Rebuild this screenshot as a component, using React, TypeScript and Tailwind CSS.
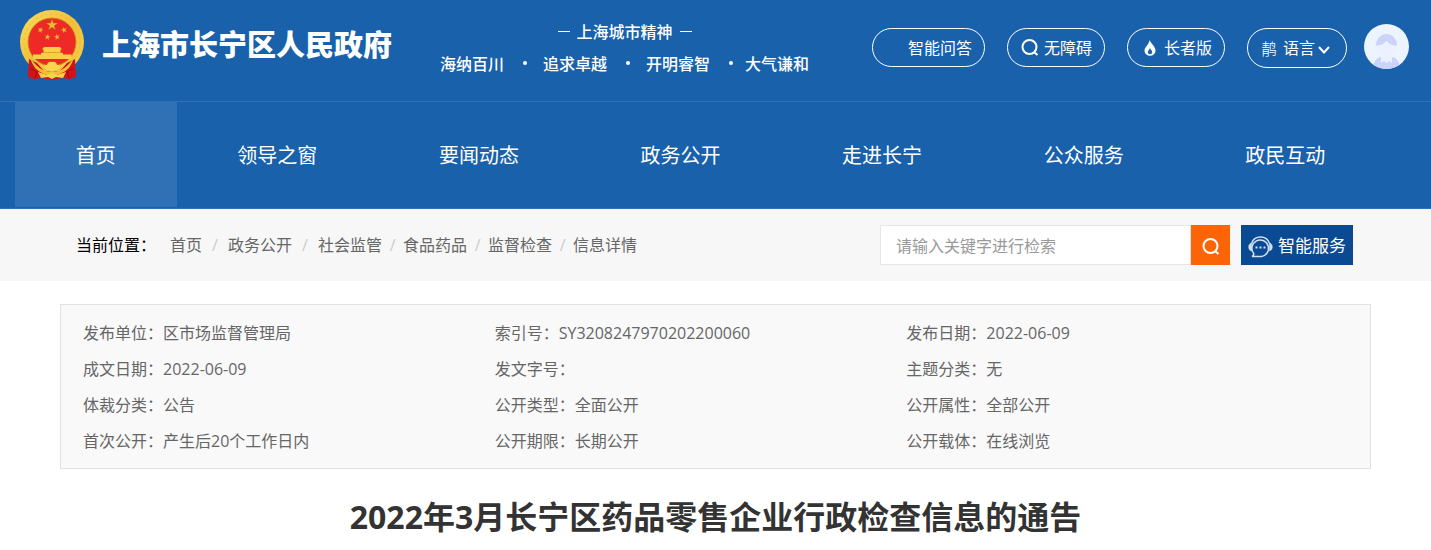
import { FunctionComponent, useState } from "react";

const navItems = ["首页", "领导之窗", "要闻动态", "政务公开", "走进长宁", "公众服务", "政民互动"];

const crumbs = ["首页", "政务公开", "社会监管", "食品药品", "监督检查", "信息详情"];

const infoList = [
  { label: "发布单位", value: "区市场监督管理局" },
  { label: "索引号", value: "SY3208247970202200060" },
  { label: "发布日期", value: "2022-06-09" },
  { label: "成文日期", value: "2022-06-09" },
  { label: "发文字号", value: "" },
  { label: "主题分类", value: "无" },
  { label: "体裁分类", value: "公告" },
  { label: "公开类型", value: "全面公开" },
  { label: "公开属性", value: "全部公开" },
  { label: "首次公开", value: "产生后20个工作日内" },
  { label: "公开期限", value: "长期公开" },
  { label: "公开载体", value: "在线浏览" },
];

const star = "M0 -1L0.225 -0.309H0.951L0.363 0.118L0.588 0.809L0 0.382L-0.588 0.809L-0.363 0.118L-0.951 -0.309H-0.225Z";

const Emblem: FunctionComponent = () => (
  <svg className="h-[70px] w-16 shrink-0" viewBox="0 0 64 70" aria-hidden="true">
    <defs>
      <linearGradient id="gold" x1="0" y1="0" x2="1" y2="1">
        <stop offset="0" stopColor="#f9dd5c" />
        <stop offset="0.5" stopColor="#f0c038" />
        <stop offset="1" stopColor="#f5cf48" />
      </linearGradient>
    </defs>
    <circle cx="32" cy="32" r="32" fill="url(#gold)" />
    <circle cx="32" cy="32" r="28" fill="none" stroke="#e5b232" strokeWidth="0.8" strokeDasharray="2 3" />
    <circle cx="32" cy="32" r="24" fill="#ee2a26" stroke="#c98a1c" strokeWidth="0.8" />
    <path d={star} fill="#eebc33" stroke="#b9551c" strokeWidth="0.08" transform="translate(32 15) scale(6.2)" />
    <path d={star} fill="#eebc33" transform="translate(20.5 20) rotate(20) scale(3.2)" />
    <path d={star} fill="#eebc33" transform="translate(44 20) rotate(-20) scale(3.2)" />
    <path d={star} fill="#eebc33" transform="translate(27.5 27) rotate(10) scale(3.2)" />
    <path d={star} fill="#eebc33" transform="translate(37 27) rotate(-10) scale(3.2)" />
    <path d="M9 49l8 4 7 8 8 1 8-1 7-8 8-4 1 18-6 2-8-1-10 2-10-2-8 1-6-2z" fill="#d51217" />
    <path d="M10 47q9 15 22 15t22-15q-3 13-14 17-8 3-16 0Q13 60 10 47z" fill="#f0c038" />
    <path d="M24 37h16l2 2.5h-1.5V43H43v1.500h8.500V49H13v-4.500h8V43h2.500V39.500H22z" fill="#f8cf45" />
    <path d="M22 42.500h20" stroke="#d78e22" strokeWidth="0.7" />
    <path d="M24 58q0-4 3-3 1-4 5-3 4-1 5 3 3-1 3 3-8 6-16 0z" fill="#f8d651" />
    <path d="M18 62l9 3 5-3 5 3 9-3-3 6-7-1-4 2-4-2-7 1z" fill="#f7d24b" />
    <path d="M10 58l7 4-2 6M54 58l-7 4 2 6" fill="none" stroke="#9f0b12" strokeWidth="1" />
  </svg>
);

const SearchIcon: FunctionComponent = () => (
  <svg className="size-[18px] shrink-0" viewBox="0 0 18 18" fill="none" stroke="currentColor" strokeWidth="2" aria-hidden="true">
    <circle cx="8.500" cy="8" r="7" />
    <path d="M13 13l3.500 3" />
  </svg>
);

const FlameIcon: FunctionComponent = () => (
  <svg className="h-4 w-3 shrink-0" viewBox="0 0 12 16" aria-hidden="true">
    <path
      d="M5.500 0C6.800 3.500 11.500 6.500 11.500 10.500A5.500 5.300 0 0 1 .5 10.500C.5 7 5 5 5.500 0zM6 8C5.500 10 3.800 10.500 3.800 12a2.200 2.200 0 0 0 4.400 0C8.200 10.500 6.800 10 6 8z"
      fill="currentColor"
      fillRule="evenodd"
    />
  </svg>
);

const HeadsetIcon: FunctionComponent = () => (
  <svg className="h-6 w-[25px] shrink-0" viewBox="0 0 25 24" fill="none" stroke="#d3e2f3" aria-hidden="true">
    <path d="M3.500 9.500a9.500 9.500 0 0 1 18 0" strokeWidth="1.500" />
    <path d="M3.500 9C1.500 9.500.7 11 .7 13s.8 3.500 2.800 4zM21.500 9c2 .5 2.800 2 2.800 4s-.8 3.500-2.800 4z" fill="#d3e2f3" strokeWidth="0.500" />
    <path d="M4 22.500c1.500-.8 2-1.700 1.700-3a8.300 8.300 0 1 1 7.800 3z" strokeWidth="1.500" />
    <path d="M7.500 13.500h2M11.500 13.500h2M15.500 13.500h2" strokeWidth="2" />
  </svg>
);

const Avatar: FunctionComponent = () => (
  <svg className="size-[45px]" viewBox="0 0 45 45" aria-hidden="true">
    <clipPath id="avatarClip">
      <circle cx="22.500" cy="22.500" r="22.500" />
    </clipPath>
    <g clipPath="url(#avatarClip)">
      <rect width="45" height="45" fill="#ebf4ff" />
      <path d="M9 45c0-7 3-11 8-12l5.500 6 5.500-6c5 1 8 5 8 12z" fill="#cbd3f8" />
      <path d="M17 30h11v9l-3-2-2.500 2-2.500-2-3 2z" fill="#edf1ff" />
      <circle cx="22.500" cy="21" r="10.500" fill="#ebf1ff" />
      <path d="M12 21.500a10.500 11.500 0 0 1 21 0c-5 0-9-2-10.500-5-1.500 3-5.500 5-10.500 5z" fill="#cbd3f8" />
    </g>
  </svg>
);

const App: FunctionComponent = () => {
  const [activeNav, setActiveNav] = useState(0);
  const [keyword, setKeyword] = useState("");

  return (
    <div className="min-h-screen bg-white text-base leading-6 text-[#666] font-['Open_Sans','Noto_Sans_CJK_SC',sans-serif]">
      <header className="bg-[#1a61ac] text-white">
        <div className="flex h-[101px] items-start justify-between pl-5 pr-[22px]">
          <div className="flex items-start">
            <a href="#home" className="flex items-center gap-[18px] pt-[10px]">
              <Emblem />
              <span className="whitespace-nowrap text-[29px] leading-[70px] font-black">上海市长宁区人民政府</span>
            </a>
            <div className="ml-12 whitespace-nowrap pt-[15px] text-center leading-8 font-medium font-['Noto_Sans_CJK_SC',sans-serif]">
              <p className="flex items-center justify-center gap-[7px]">
                <span className="h-px w-3 bg-white" />
                上海城市精神
                <span className="h-px w-3 bg-white" />
              </p>
              <p className="flex items-center">
                <span>海纳百川</span>
                <span className="ml-[19px] mr-4 size-1 rounded-full bg-white" />
                <span>追求卓越</span>
                <span className="ml-[19px] mr-4 size-1 rounded-full bg-white" />
                <span>开明睿智</span>
                <span className="ml-[19px] mr-3 size-1 rounded-full bg-white" />
                <span>大气谦和</span>
              </p>
            </div>
          </div>
          <div className="flex items-start gap-[22px] whitespace-nowrap pt-6">
            <div className="flex gap-[22px] pt-1">
              <button type="button" className="h-[39px] rounded-full border border-white pl-[35px] pr-3">智能问答</button>
              <button type="button" className="flex h-[39px] items-center gap-[5px] rounded-full border border-white pl-[13px] pr-3">
                <SearchIcon />
                无障碍
              </button>
              <button type="button" className="flex h-[39px] items-center gap-2 rounded-full border border-white pl-4 pr-3">
                <FlameIcon />
                长者版
              </button>
              <button type="button" aria-haspopup="menu" className="flex h-10 items-center rounded-full border border-white pl-[13px] pr-4">
                <span className="mr-[6px] font-['Noto_Sans_CJK_SC',sans-serif] font-light">䴖</span>
                语言
                <svg className="ml-[3px] mt-1 h-2 w-3" viewBox="0 0 12 8" fill="none" stroke="currentColor" strokeWidth="2" aria-hidden="true">
                  <path d="M1 1l5 5.500L11 1" />
                </svg>
              </button>
            </div>
            <a href="#user" aria-label="个人中心" className="-ml-[5px]">
              <Avatar />
            </a>
          </div>
        </div>
        <nav className="flex border-y border-[#3071b5] pl-[15px] pr-[45px] pb-px">
          {navItems.map((item, index) => (
            <a
              key={item}
              href="#nav"
              onClick={() => setActiveNav(index)}
              className={`flex-auto whitespace-nowrap px-10 pt-[3px] text-center text-xl leading-[102px] ${activeNav === index ? "bg-[#3071b5]" : ""}`}
            >
              {item}
            </a>
          ))}
        </nav>
      </header>

      <div className="flex items-center justify-between bg-[#f7f7f7] py-4 pl-[76px] pr-[78px]">
        <div className="flex whitespace-nowrap">
          <span className="mr-[14px] text-black">当前位置：</span>
          {crumbs.map((item, index) => (
            <span key={item} className="flex">
              {index > 0 && <span className={`text-center text-[#ccc] ${index < 3 ? "w-[26px]" : "w-[21px]"}`}>/</span>}
              <a href="#crumb">{item}</a>
            </span>
          ))}
        </div>
        <div className="flex">
          <form className="flex" onSubmit={(e) => e.preventDefault()}>
            <input
              type="text"
              aria-label="检索关键字"
              placeholder="请输入关键字进行检索"
              value={keyword}
              onChange={(e) => setKeyword(e.target.value)}
              className="h-10 w-[311px] border border-[#e6e6e6] bg-white px-[15px] pt-px outline-none placeholder:text-[#999]"
            />
            <button type="submit" aria-label="检索" className="flex h-10 w-[39px] items-center justify-center bg-[#fb6507] pt-1 text-white">
              <SearchIcon />
            </button>
          </form>
          <a href="#service" className="ml-[11px] flex h-10 w-28 items-center gap-[5px] whitespace-nowrap bg-[#0a4a93] pl-[7px] pt-[2px] text-[17px] text-white">
            <HeadsetIcon />
            智能服务
          </a>
        </div>
      </div>

      <main className="px-15 pt-[23px]">
        <dl className="grid grid-cols-3 border border-[#e2e2e2] bg-[#f9f9f9] pt-[10px] pr-[52px] pb-[9px] pl-[22px]">
          {infoList.map((item) => (
            <div key={item.label} className="flex whitespace-nowrap leading-9">
              <dt>{item.label}：</dt>
              <dd>{item.value}</dd>
            </div>
          ))}
        </dl>
        <h1 className="mt-6 text-center text-[32px] leading-12 font-bold text-[#333]">
          2022年3月长宁区药品零售企业行政检查信息的通告
        </h1>
      </main>
    </div>
  );
};

export default App;
